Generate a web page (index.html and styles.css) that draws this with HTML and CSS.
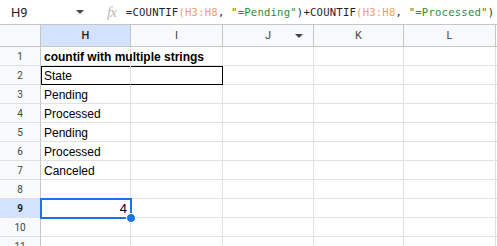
FILE: index.html
```html
<!DOCTYPE html>
<html lang="en">
<head>
<meta charset="UTF-8">
<title>countif with multiple strings</title>
<link rel="stylesheet" href="styles.css">
</head>
<body>
<div class="formula-bar">
  <div class="name-box">H9</div>
  <span class="caret"></span>
  <span class="fx">fx</span>
  <div class="formula">=COUNTIF<span class="rng">(H3:H8</span>, <span class="str">"=Pending"</span>)+COUNTIF<span class="rng">(H3:H8</span>, <span class="str">"=Processed"</span>)</div>
</div>

<div class="sheet">
  <div class="corner"></div>
  <div class="col-head active">H</div>
  <div class="col-head">I</div>
  <div class="col-head drop">J<span class="caret small"></span></div>
  <div class="col-head">K</div>
  <div class="col-head">L</div>
  <div class="edge head-edge"></div>

  <div class="row-head">1</div>
  <div class="cell bold">countif with multiple strings</div><div class="cell"></div><div class="cell"></div><div class="cell"></div><div class="cell"></div><div class="edge"></div>

  <div class="row-head">2</div>
  <div class="cell boxed-l">State</div><div class="cell boxed-r"></div><div class="cell"></div><div class="cell"></div><div class="cell"></div><div class="edge"></div>

  <div class="row-head">3</div>
  <div class="cell">Pending</div><div class="cell"></div><div class="cell"></div><div class="cell"></div><div class="cell"></div><div class="edge"></div>

  <div class="row-head">4</div>
  <div class="cell">Processed</div><div class="cell"></div><div class="cell"></div><div class="cell"></div><div class="cell"></div><div class="edge"></div>

  <div class="row-head">5</div>
  <div class="cell">Pending</div><div class="cell"></div><div class="cell"></div><div class="cell"></div><div class="cell"></div><div class="edge"></div>

  <div class="row-head">6</div>
  <div class="cell">Processed</div><div class="cell"></div><div class="cell"></div><div class="cell"></div><div class="cell"></div><div class="edge"></div>

  <div class="row-head">7</div>
  <div class="cell">Canceled</div><div class="cell"></div><div class="cell"></div><div class="cell"></div><div class="cell"></div><div class="edge"></div>

  <div class="row-head">8</div>
  <div class="cell"></div><div class="cell"></div><div class="cell"></div><div class="cell"></div><div class="cell"></div><div class="edge"></div>

  <div class="row-head active">9</div>
  <div class="cell num selected">4<span class="handle"></span></div><div class="cell"></div><div class="cell"></div><div class="cell"></div><div class="cell"></div><div class="edge"></div>

  <div class="row-head">10</div>
  <div class="cell"></div><div class="cell"></div><div class="cell"></div><div class="cell"></div><div class="cell"></div><div class="edge"></div>

  <div class="row-head">11</div>
  <div class="cell"></div><div class="cell"></div><div class="cell"></div><div class="cell"></div><div class="cell"></div><div class="edge"></div>
</div>
</body>
</html>
```

FILE: styles.css
```css
:root{
  --head-bg: #f8f9fa;
  --head-line: #c4c7c5;
  --grid: #e1e1e1;
  --active: #d3e3fd;
  --blue: #1a73e8;
  --text: #000;
  --dim: #444746;
}
*{ box-sizing: border-box; }
html,body{ margin:0; padding:0; background:#fff; overflow:hidden; }
body{ font-family: Roboto, "Liberation Sans", Arial, sans-serif; }

.formula-bar{
  height: 25px; display:flex; align-items:center;
  border-bottom: 1px solid var(--head-line);
}
.name-box{ width: 66px; padding-left: 11px; font-size: 13px; color: #1f1f1f; }
.caret{
  width:0; height:0; border-left: 4px solid transparent; border-right: 4px solid transparent;
  border-top: 4px solid #444746; margin-left: 10px;
}
.fx{
  margin-left: 23px; font-family: "Liberation Serif", serif; font-style: italic;
  font-size: 15px; color: #b8b8b8; letter-spacing: -1px;
}
.formula{
  margin-left: 10px; font-family: "DejaVu Sans Mono", monospace; font-size: 10.6px;
  letter-spacing: 0.2px; color: #1f1f1f; white-space: pre;
}
.formula .rng{ color: #f0a070; }
.formula .str{ color: #1e8e3e; }

.sheet{
  display:grid;
  grid-template-columns: 41px 90px 92px 91px 90px 92px 2px;
  grid-template-rows: 22px repeat(11, 19px);
}
.corner{
  background: var(--head-bg);
  border-right: 1px solid var(--head-line); border-bottom: 1px solid var(--head-line);
}
.col-head{
  background: var(--head-bg); display:flex; align-items:center; justify-content:center;
  font-size: 11px; color: var(--dim);
  border-right: 1px solid var(--head-line); border-bottom: 1px solid var(--head-line);
  position: relative;
}
.col-head.active{ background: var(--active); color: #1f1f1f; font-weight: 500; }
.col-head .caret.small{ position:absolute; right: 10px; top: 9px; margin:0; }
.row-head{
  background: var(--head-bg); display:flex; align-items:center; justify-content:center;
  font-size: 10px; color: var(--dim);
  border-right: 1px solid var(--head-line); border-bottom: 1px solid var(--grid);
}
.row-head.active{ background: var(--active); color: #1f1f1f; font-weight: 700; }
.edge{ border-bottom: 1px solid var(--grid); }
.edge.head-edge{ border-bottom-color: var(--head-line); }

.cell{
  font-family: "Liberation Sans", Arial, sans-serif; font-size: 12px; color: var(--text);
  border-right: 1px solid var(--grid); border-bottom: 1px solid var(--grid);
  padding: 1px 3px 0; line-height: 18px; white-space: nowrap; overflow: visible;
  position: relative;
}
.cell.bold{ font-weight: 700; }
.cell.num{ text-align: right; font-size: 13px; }
.cell.boxed-l, .cell.boxed-r{ box-shadow: inset 0 1px 0 #000; border-bottom-color:#000; }
.cell.boxed-l{ box-shadow: inset 1px 1px 0 #000; }
.cell.boxed-r{ border-right-color: #000; }
.cell.selected{
  outline: 2px solid var(--blue); outline-offset: -1px; line-height: 17px; z-index: 2;
}
.handle{
  position:absolute; right: -6px; bottom: -6px; width: 10px; height: 10px;
  background: var(--blue); border: 1px solid #fff; border-radius: 50%;
}
```
